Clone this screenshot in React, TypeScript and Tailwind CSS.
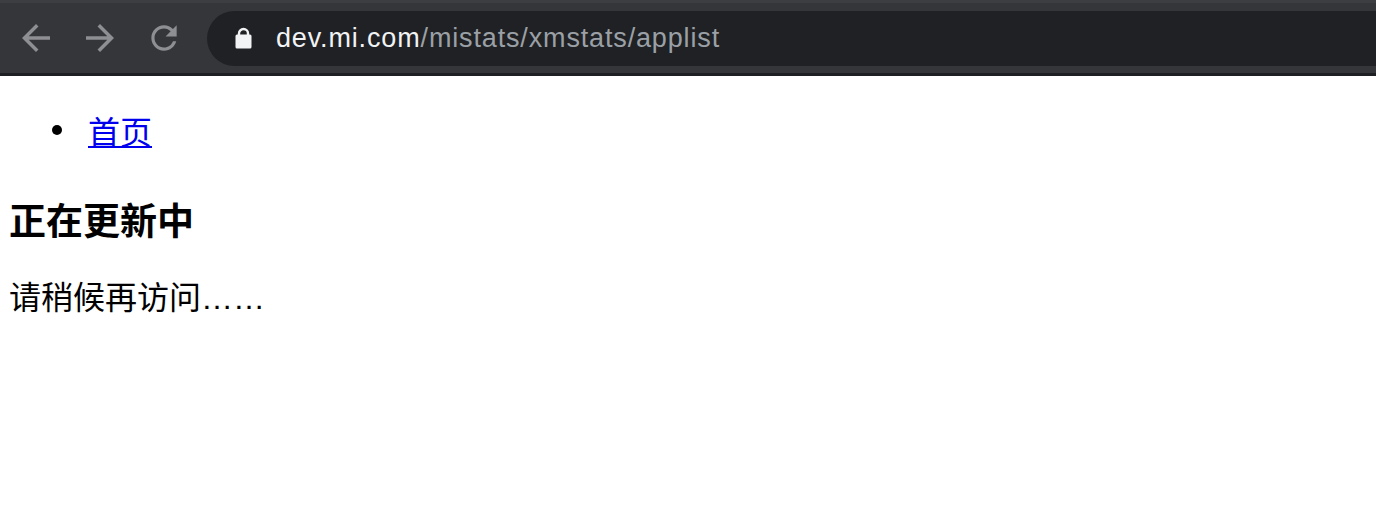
const cjk = '"Noto Sans CJK SC", sans-serif';

function BackIcon() {
  return (
    <svg width="42" height="42" viewBox="0 0 24 24" fill="#8e8f93">
      <path d="M20 11H7.83l5.59-5.59L12 4l-8 8 8 8 1.41-1.41L7.83 13H20v-2z" />
    </svg>
  );
}

function ForwardIcon() {
  return (
    <svg width="42" height="42" viewBox="0 0 24 24" fill="#8e8f93">
      <path d="M4 11h12.17l-5.59-5.59L12 4l8 8-8 8-1.41-1.41L16.17 13H4v-2z" />
    </svg>
  );
}

function ReloadIcon() {
  return (
    <svg width="38" height="38" viewBox="0 0 24 24" fill="#8e8f93">
      <path d="M17.65 6.35C16.2 4.9 14.21 4 12 4c-4.42 0-7.99 3.58-7.99 8s3.57 8 7.99 8c3.73 0 6.84-2.55 7.73-6h-2.08c-.82 2.33-3.04 4-5.65 4-3.31 0-6-2.69-6-6s2.69-6 6-6c1.66 0 3.14.69 4.22 1.78L13 11h7V4l-2.35 2.35z" />
    </svg>
  );
}

function LockIcon() {
  return (
    <svg width="17" height="22" viewBox="0 0 17 22">
      <path d="M4 8V6.5a4.5 4.5 0 0 1 9 0V8" fill="none" stroke="#f1f3f4" strokeWidth="2.4" />
      <rect x="0.5" y="7.5" width="16" height="14" rx="1.5" fill="#f1f3f4" />
    </svg>
  );
}

export default function App() {
  return (
    <div className="min-h-screen bg-white">
      <div className="overflow-hidden border-b-[3px] border-[#1e1f22] bg-[#35363a]">
        <div className="flex h-[73px] items-center border-t-[3px] border-[#3d3e42]">
          <div className="ml-[15px] flex items-center">
            <BackIcon />
          </div>
          <div className="ml-[22px] flex items-center">
            <ForwardIcon />
          </div>
          <div className="ml-[24px] flex items-center">
            <ReloadIcon />
          </div>
          <div className="-mr-[60px] ml-[24px] flex h-[55px] flex-1 items-center rounded-full bg-[#202124] pl-[28px]">
            <LockIcon />
            <span
              className="ml-[24px] text-[27px] leading-none tracking-[0.85px]"
              style={{ fontFamily: '"Liberation Sans", Arial, sans-serif' }}
            >
              <span className="text-[#f1f3f4]">dev.mi.com</span>
              <span className="text-[#9aa0a6]">/mistats/xmstats/applist</span>
            </span>
          </div>
        </div>
      </div>

      <div className="text-black" style={{ fontFamily: cjk }}>
        <ul className="mt-[34px] flex items-center">
          <li className="flex items-center">
            <span className="ml-[52px] h-[10px] w-[10px] rounded-full bg-black" />
            <a
              href="#"
              className="ml-[26px] text-[32px] leading-[40px] text-[#0000ee] underline decoration-2 underline-offset-[2px]"
            >
              首页
            </a>
          </li>
        </ul>
        <h3 className="ml-[9px] mt-[47px] text-[37px] font-bold leading-[44px]">正在更新中</h3>
        <p
          className="ml-[9px] mt-[37px] text-[32px] leading-[40px]"
          style={{ fontFamily: '"Liberation Sans", "Noto Sans CJK SC", sans-serif' }}
        >
          请稍候再访问……
        </p>
      </div>
    </div>
  );
}
